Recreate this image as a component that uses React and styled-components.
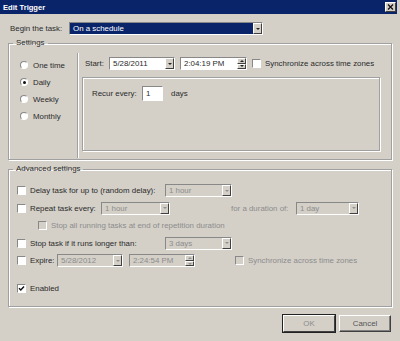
import React from 'react';
import styled, { createGlobalStyle } from 'styled-components';

const GlobalStyle = createGlobalStyle`
  html, body { margin: 0; padding: 0; background: #d4d0c8; }
  body {
    font-family: "Liberation Sans", Arial, sans-serif;
    font-size: 7.9px;
    color: #2a2a2a;
  }
`;

const Window = styled.div`
  width: 400px;
  height: 341px;
  background: #d4d0c8;
  display: flex;
  flex-direction: column;
  overflow: hidden;
`;

const TitleBar = styled.div`
  height: 14px;
  margin-right: 3px;
  background: #0a246a;
  display: flex;
  align-items: center;
  justify-content: space-between;
  padding: 0 1px 0 3px;
`;

const Title = styled.span`
  color: #fff;
  font-weight: bold;
  font-size: 7.6px;
`;

const CloseBtn = styled.div`
  width: 11px;
  height: 10px;
  box-sizing: border-box;
  background: #d4d0c8;
  border: 1px solid;
  border-color: #fff #404040 #404040 #fff;
  display: flex;
  align-items: center;
  justify-content: center;
`;

const Body = styled.div`
  padding: 0 8px;
  display: flex;
  flex-direction: column;
`;

const Row = styled.div`
  display: flex;
  align-items: center;
  height: ${p => p.$h || 17.5}px;
  margin-top: ${p => p.$mt || 0}px;
  padding-left: ${p => p.$pl || 0}px;
`;

const Label = styled.span`
  width: ${p => (p.$w ? `${p.$w}px` : 'auto')};
  flex-shrink: 0;
  margin-left: ${p => p.$ml || 0}px;
  color: ${p => (p.$disabled ? '#8c8c8c' : 'inherit')};
  white-space: nowrap;
`;

const Field = styled.div`
  width: ${p => p.$w}px;
  height: ${p => p.$h || 13}px;
  margin-left: ${p => p.$ml || 0}px;
  box-sizing: border-box;
  flex-shrink: 0;
  display: flex;
  border: 1px solid;
  border-color: #888 #fff #fff #888;
  background: ${p => (p.$dark ? '#0a246a' : p.$disabled ? '#d4d0c8' : '#fff')};
  color: ${p => (p.$dark ? '#fff' : p.$disabled ? '#8c8c8c' : 'inherit')};
`;

const FieldText = styled.div`
  flex: 1;
  padding-left: 3px;
  display: flex;
  align-items: center;
  white-space: nowrap;
  overflow: hidden;
`;

const ArrowBtn = styled.div`
  width: 9px;
  box-sizing: border-box;
  background: #d4d0c8;
  border: 1px solid;
  border-color: #fff #404040 #404040 #fff;
  display: flex;
  align-items: center;
  justify-content: center;
`;

const Tri = styled.div`
  width: 0;
  height: 0;
  border-left: 2.5px solid transparent;
  border-right: 2.5px solid transparent;
  ${p => (p.$up ? 'border-bottom' : 'border-top')}: 2.5px solid ${p => (p.$disabled ? '#909090' : '#222')};
`;

const Spin = styled.div`
  width: 9px;
  display: flex;
  flex-direction: column;
`;

const SpinHalf = styled(ArrowBtn)`
  width: 100%;
  flex: 1;
`;

const Check = styled.div`
  width: 9px;
  height: 9px;
  box-sizing: border-box;
  flex-shrink: 0;
  margin-left: ${p => p.$ml || 0}px;
  margin-right: 4px;
  border: 1px solid;
  border-color: #888 #fff #fff #888;
  background: ${p => (p.$disabled ? '#d4d0c8' : '#fff')};
  display: flex;
  align-items: center;
  justify-content: center;
`;

const Radio = styled.div`
  width: 8px;
  height: 8px;
  box-sizing: border-box;
  border-radius: 50%;
  border: 1px solid;
  border-color: #888 #fff #fff #888;
  background: #fff;
  margin-right: 5px;
  display: flex;
  align-items: center;
  justify-content: center;
  &::after {
    content: '';
    display: ${p => (p.$on ? 'block' : 'none')};
    width: 3px;
    height: 3px;
    border-radius: 50%;
    background: #111;
  }
`;

const Group = styled.fieldset`
  margin: ${p => p.$mt || 0}px 0 0 0;
  padding: 0;
  border: 1px solid #a0a0a0;
  box-shadow: inset 1px 1px 0 #fff, 1px 1px 0 #fff;
  min-width: 0;
`;

const Legend = styled.legend`
  margin-left: 4px;
  padding: 0 3px;
  line-height: 10px;
  font-size: 7.9px;
`;

const SettingsBody = styled.div`
  display: flex;
  height: 111px;
`;

const RadioCol = styled.div`
  width: 69px;
  margin: 5px 0 1px;
  border-right: 1px solid #a0a0a0;
  box-shadow: 1px 0 0 #fff;
  padding: 3.5px 0 0 11px;
  box-sizing: border-box;
  display: flex;
  flex-direction: column;
`;

const RightCol = styled.div`
  flex: 1;
  padding: 9px 11px 8px 7px;
  display: flex;
  flex-direction: column;
`;

const RecurPanel = styled.div`
  flex: 1;
  margin: 7px 0 0 -3px;
  border: 1px solid #a0a0a0;
  box-shadow: inset 1px 1px 0 #fff, 1px 1px 0 #fff;
  padding: 8px 0 0 9px;
`;

const AdvBody = styled.div`
  padding: 8px 0 9px 8px;
  display: flex;
  flex-direction: column;
`;

const ButtonRow = styled.div`
  display: flex;
  justify-content: flex-end;
  gap: 4px;
  margin-top: 8px;
  padding-right: 1px;
`;

const Button = styled.div`
  width: 52px;
  height: 17px;
  box-sizing: border-box;
  display: flex;
  align-items: center;
  justify-content: center;
  border: 1px solid;
  border-color: #fff #404040 #404040 #fff;
  box-shadow: ${p => (p.$default ? '0 0 0 1px #222' : 'inset -1px -1px 0 #808080')};
  color: ${p => (p.$dim ? '#8c8c8c' : '#555')};
`;

function Combo({ width, value, disabled, ml }) {
  return (
    <Field $w={width} $disabled={disabled} $ml={ml}>
      <FieldText>{value}</FieldText>
      <ArrowBtn><Tri $disabled={disabled} /></ArrowBtn>
    </Field>
  );
}

function Spinner({ width, value, disabled, ml }) {
  return (
    <Field $w={width} $disabled={disabled} $ml={ml}>
      <FieldText>{value}</FieldText>
      <Spin>
        <SpinHalf><Tri $up $disabled={disabled} /></SpinHalf>
        <SpinHalf><Tri $disabled={disabled} /></SpinHalf>
      </Spin>
    </Field>
  );
}

function CheckMark() {
  return (
    <svg width="7" height="7" viewBox="0 0 7 7">
      <path d="M1 3.2 L2.8 5 L6 1.5" stroke="#111" strokeWidth="1.4" fill="none" />
    </svg>
  );
}

export default function App() {
  return (
    <Window>
      <GlobalStyle />
      <TitleBar>
        <Title>Edit Trigger</Title>
        <CloseBtn>
          <svg width="7" height="6" viewBox="0 0 7 6">
            <path d="M1 0.5 L6 5.5 M6 0.5 L1 5.5" stroke="#111" strokeWidth="1.3" />
          </svg>
        </CloseBtn>
      </TitleBar>

      <Body>
        <Row $h={13} $mt={8} $pl={2}>
          <Label $w={59}>Begin the task:</Label>
          <Field $w={194} $dark>
            <FieldText>On a schedule</FieldText>
            <ArrowBtn><Tri /></ArrowBtn>
          </Field>
        </Row>

        <Group $mt={3}>
          <Legend>Settings</Legend>
          <SettingsBody>
            <RadioCol>
              <Row $h={17}><Radio />One time</Row>
              <Row $h={17}><Radio $on />Daily</Row>
              <Row $h={17}><Radio />Weekly</Row>
              <Row $h={17}><Radio />Monthly</Row>
            </RadioCol>
            <RightCol>
              <Row $h={13}>
                <Label $w={24}>Start:</Label>
                <Combo width={66} value="5/28/2011" />
                <Spinner width={67} value="2:04:19 PM" ml={5} />
                <Check $ml={5} />
                <Label>Synchronize across time zones</Label>
              </Row>
              <RecurPanel>
                <Row $h={15}>
                  <Label $w={50}>Recur every:</Label>
                  <Field $w={21} $h={15}><FieldText>1</FieldText></Field>
                  <Label $ml={8}>days</Label>
                </Row>
              </RecurPanel>
            </RightCol>
          </SettingsBody>
        </Group>

        <Group $mt={4}>
          <Legend>Advanced settings</Legend>
          <AdvBody>
            <Row>
              <Check />
              <Label $w={135}>Delay task for up to (random delay):</Label>
              <Combo width={67} value="1 hour" disabled />
            </Row>
            <Row>
              <Check />
              <Label $w={71}>Repeat task every:</Label>
              <Combo width={69} value="1 hour" disabled />
              <Label $w={65} $ml={61} $disabled>for a duration of:</Label>
              <Combo width={63} value="1 day" disabled />
            </Row>
            <Row>
              <Check $ml={21} $disabled />
              <Label $disabled>Stop all running tasks at end of repetition duration</Label>
            </Row>
            <Row>
              <Check />
              <Label $w={135}>Stop task if it runs longer than:</Label>
              <Combo width={67} value="3 days" disabled />
            </Row>
            <Row>
              <Check />
              <Label $w={27}>Expire:</Label>
              <Combo width={66} value="5/28/2012" disabled />
              <Spinner width={66} value="2:24:54 PM" disabled ml={6} />
              <Check $ml={40} $disabled />
              <Label $disabled>Synchronize across time zones</Label>
            </Row>
            <Row $mt={10}>
              <Check><CheckMark /></Check>
              <Label>Enabled</Label>
            </Row>
          </AdvBody>
        </Group>

        <ButtonRow>
          <Button $default $dim>OK</Button>
          <Button>Cancel</Button>
        </ButtonRow>
      </Body>
    </Window>
  );
}
